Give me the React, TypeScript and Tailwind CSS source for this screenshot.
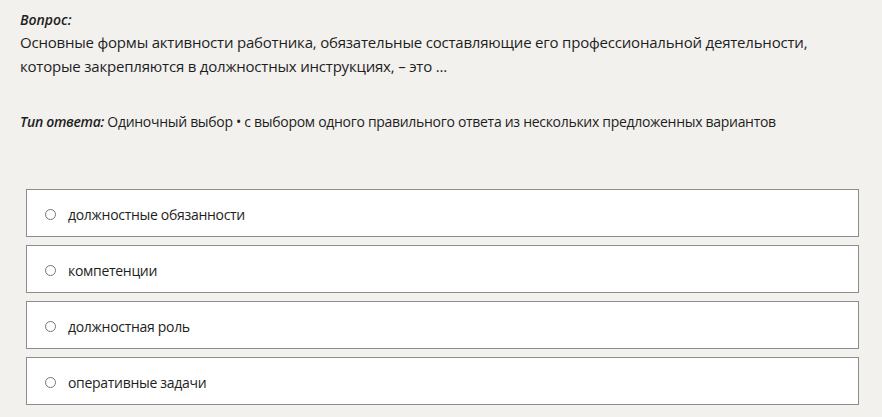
const options = [
  'должностные обязанности',
  'компетенции',
  'должностная роль',
  'оперативные задачи',
];

export default function App() {
  return (
    <div
      className="w-[882px] h-[417px] bg-[#f2f1ee] text-[#1e1e1e] px-5 pt-[11px]"
      style={{ fontFamily: '"Open Sans", "Noto Sans", sans-serif' }}
    >
      <div className="text-[14px] leading-[18px] font-semibold italic">Вопрос:</div>
      <div className="text-[15px] leading-[24px] mt-px tracking-[-0.2px]">
        Основные формы активности работника, обязательные составляющие его профессиональной деятельности,
        <br />
        которые закрепляются в должностных инструкциях, – это ...
      </div>
      <div className="text-[14px] leading-[20px] mt-[34px] tracking-[-0.3px]">
        <span className="font-semibold italic">Тип ответа:</span> Одиночный выбор • с выбором одного
        правильного ответа из нескольких предложенных вариантов
      </div>
      <div className="mt-[57px] ml-[6px] w-[833px] flex flex-col gap-[8px]">
        {options.map((o) => (
          <label
            key={o}
            className="h-[48px] bg-white border border-[#8c8c8c] flex items-center pt-[3px] pl-[18px] text-[14px] tracking-[-0.3px]"
          >
            <span className="w-[11px] h-[11px] rounded-full border border-[#767676] bg-white mr-[12px]" />
            {o}
          </label>
        ))}
      </div>
    </div>
  );
}
